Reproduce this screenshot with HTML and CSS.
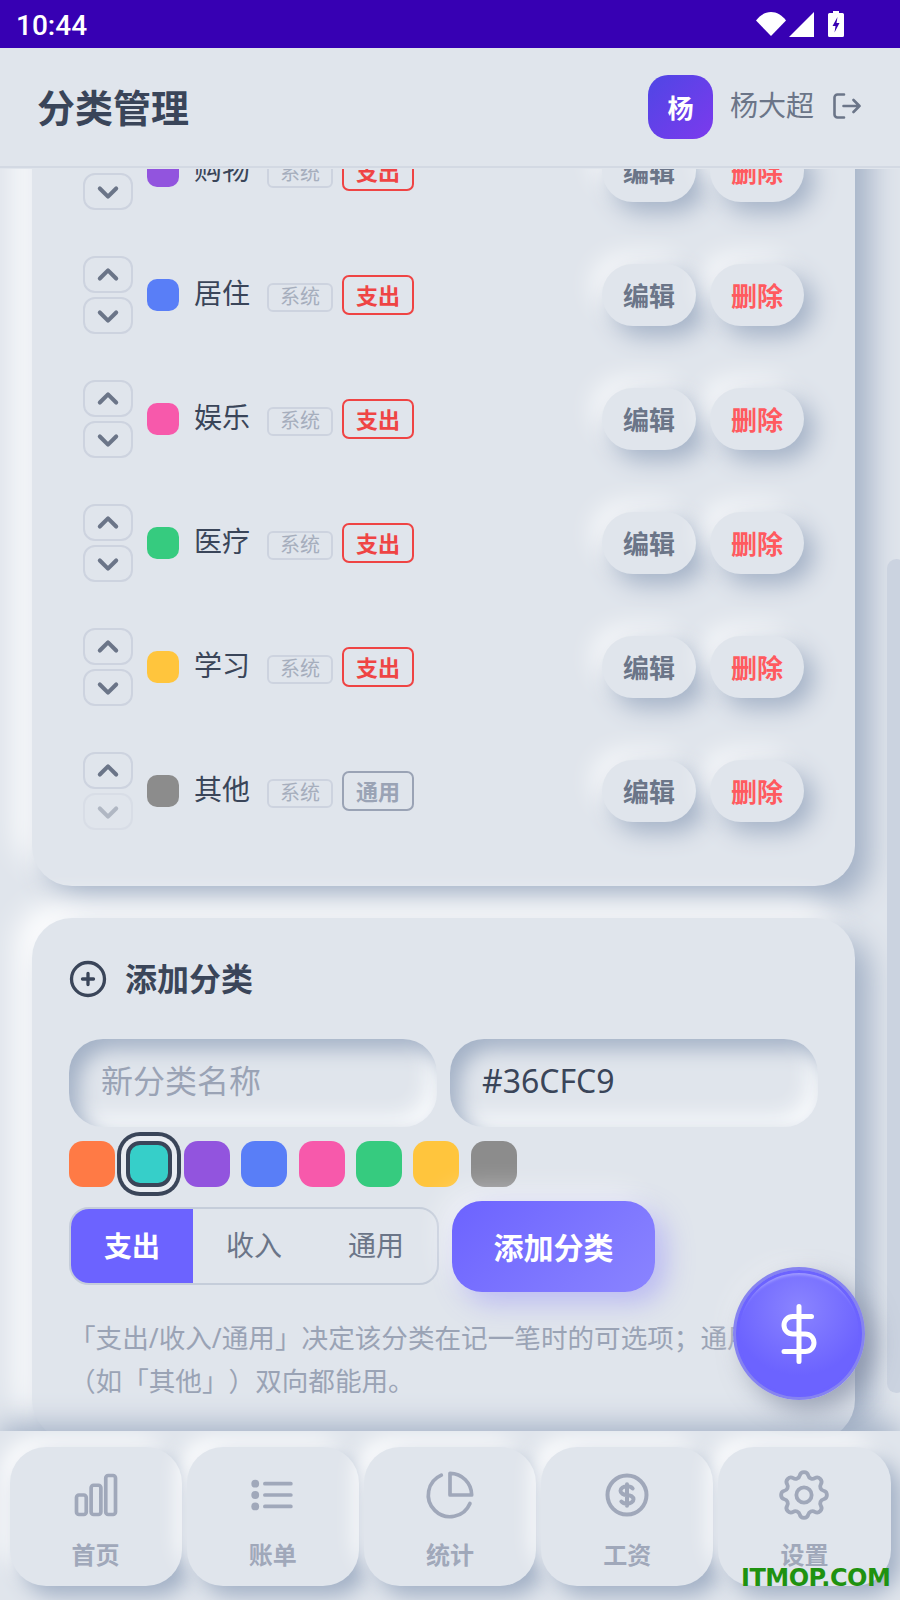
FILE: index.html
```html
<!DOCTYPE html>
<html lang="zh">
<head>
<meta charset="utf-8">
<title>分类管理</title>
<link rel="stylesheet" href="styles.css">
</head>
<body>
<div class="app">
  <div class="statusbar">
    <span class="time">10:44</span>
    <div class="status-icons">
      <svg class="ic-wifi" viewBox="0 0 30 24"><path d="M0 8.5C4 3.2 9.2 0 15 0s11 3.200 15 8.500L15 24z"/></svg>
      <svg class="ic-signal" viewBox="0 0 25 25"><path d="M25 0v25H0z"/></svg>
      <svg class="ic-battery" viewBox="0 0 16 26"><path fill="#fff" d="M5 0h6v2h3.500A1.500 1.500 0 0 1 16 3.500v21a1.500 1.500 0 0 1-1.500 1.500h-13A1.500 1.500 0 0 1 0 24.500v-21A1.500 1.500 0 0 1 1.500 2H5z"/><path fill="#3700b3" d="M9.500 6 4.500 15h3l-1 6.500 5-9.500h-3z"/></svg>
    </div>
  </div>

  <header class="header">
    <h1 class="title">分类管理</h1>
    <div class="user">
      <div class="avatar">杨</div>
      <span class="username">杨大超</span>
      <svg class="ic-logout" viewBox="0 0 28 26" fill="none" stroke-linecap="round" stroke-linejoin="round"><path d="M11 1.500H4.500a3 3 0 0 0-3 3v17a3 3 0 0 0 3 3H11M10.500 13h16M20.500 7l6 6-6 6"/></svg>
    </div>
  </header>

  <main class="main">
    <div class="scroller">
      <section class="card card-list">
        <div class="row">
          <div class="arrows"><button class="arrow"><svg viewBox="0 0 24 24"><path d="M5 15l7-7 7 7"/></svg></button><button class="arrow"><svg viewBox="0 0 24 24"><path d="M5 9l7 7 7-7"/></svg></button></div>
          <span class="swatch c-purple"></span><span class="name">购物</span><span class="sys">系统</span><span class="type expense">支出</span>
          <div class="actions"><button class="btn edit">编辑</button><button class="btn del">删除</button></div>
        </div>
        <div class="row">
          <div class="arrows"><button class="arrow"><svg viewBox="0 0 24 24"><path d="M5 15l7-7 7 7"/></svg></button><button class="arrow"><svg viewBox="0 0 24 24"><path d="M5 9l7 7 7-7"/></svg></button></div>
          <span class="swatch c-blue"></span><span class="name">居住</span><span class="sys">系统</span><span class="type expense">支出</span>
          <div class="actions"><button class="btn edit">编辑</button><button class="btn del">删除</button></div>
        </div>
        <div class="row">
          <div class="arrows"><button class="arrow"><svg viewBox="0 0 24 24"><path d="M5 15l7-7 7 7"/></svg></button><button class="arrow"><svg viewBox="0 0 24 24"><path d="M5 9l7 7 7-7"/></svg></button></div>
          <span class="swatch c-pink"></span><span class="name">娱乐</span><span class="sys">系统</span><span class="type expense">支出</span>
          <div class="actions"><button class="btn edit">编辑</button><button class="btn del">删除</button></div>
        </div>
        <div class="row">
          <div class="arrows"><button class="arrow"><svg viewBox="0 0 24 24"><path d="M5 15l7-7 7 7"/></svg></button><button class="arrow"><svg viewBox="0 0 24 24"><path d="M5 9l7 7 7-7"/></svg></button></div>
          <span class="swatch c-green"></span><span class="name">医疗</span><span class="sys">系统</span><span class="type expense">支出</span>
          <div class="actions"><button class="btn edit">编辑</button><button class="btn del">删除</button></div>
        </div>
        <div class="row">
          <div class="arrows"><button class="arrow"><svg viewBox="0 0 24 24"><path d="M5 15l7-7 7 7"/></svg></button><button class="arrow"><svg viewBox="0 0 24 24"><path d="M5 9l7 7 7-7"/></svg></button></div>
          <span class="swatch c-yellow"></span><span class="name">学习</span><span class="sys">系统</span><span class="type expense">支出</span>
          <div class="actions"><button class="btn edit">编辑</button><button class="btn del">删除</button></div>
        </div>
        <div class="row">
          <div class="arrows"><button class="arrow"><svg viewBox="0 0 24 24"><path d="M5 15l7-7 7 7"/></svg></button><button class="arrow disabled"><svg viewBox="0 0 24 24"><path d="M5 9l7 7 7-7"/></svg></button></div>
          <span class="swatch c-gray"></span><span class="name">其他</span><span class="sys">系统</span><span class="type general">通用</span>
          <div class="actions"><button class="btn edit">编辑</button><button class="btn del">删除</button></div>
        </div>
      </section>

      <section class="card card-add">
        <div class="add-head">
          <svg class="ic-plus" viewBox="0 0 24 24" fill="none"><path d="M12 9v3m0 0v3m0-3h3m-3 0H9m12 0a9 9 0 11-18 0 9 9 0 0118 0z" stroke-linecap="round" stroke-linejoin="round"/></svg>
          <h2 class="add-title">添加分类</h2>
        </div>
        <div class="inputs">
          <div class="input placeholder">新分类名称</div>
          <div class="input value">#36CFC9</div>
        </div>
        <div class="palette">
          <span class="pick c-orange"></span>
          <span class="pick c-teal selected"></span>
          <span class="pick c-purple"></span>
          <span class="pick c-blue"></span>
          <span class="pick c-pink"></span>
          <span class="pick c-green"></span>
          <span class="pick c-yellow"></span>
          <span class="pick c-gray"></span>
        </div>
        <div class="submit-row">
          <div class="segment">
            <span class="seg active">支出</span>
            <span class="seg">收入</span>
            <span class="seg">通用</span>
          </div>
          <button class="submit">添加分类</button>
        </div>
        <p class="hint">「支出/收入/通用」决定该分类在记一笔时的可选项；通用（如「其他」）双向都能用。</p>
      </section>
    </div>
    <div class="scrollbar"></div>
  </main>

  <nav class="nav">
    <a class="tab">
      <svg viewBox="0 0 24 24" fill="none"><path stroke-linecap="round" stroke-linejoin="round" d="M3 13.125C3 12.504 3.504 12 4.125 12h2.250c.621 0 1.125.504 1.125 1.125v6.750C7.500 20.496 6.996 21 6.375 21h-2.250A1.125 1.125 0 013 19.875v-6.750zM9.750 8.625c0-.621.504-1.125 1.125-1.125h2.250c.621 0 1.125.504 1.125 1.125v11.250c0 .621-.504 1.125-1.125 1.125h-2.250a1.125 1.125 0 01-1.125-1.125V8.625zM16.500 4.125c0-.621.504-1.125 1.125-1.125h2.250C20.496 3 21 3.504 21 4.125v15.750c0 .621-.504 1.125-1.125 1.125h-2.250a1.125 1.125 0 01-1.125-1.125V4.125z"/></svg>
      <span class="tab-label">首页</span>
    </a>
    <a class="tab">
      <svg viewBox="0 0 24 24" fill="none"><path stroke-linecap="round" d="M8.250 6.750h12M8.250 12h12m-12 5.250h12"/><circle class="dot" cx="3.800" cy="6.750" r="1.800"/><circle class="dot" cx="3.800" cy="12" r="1.800"/><circle class="dot" cx="3.800" cy="17.250" r="1.800"/></svg>
      <span class="tab-label">账单</span>
    </a>
    <a class="tab">
      <svg viewBox="0 0 24 24" fill="none"><path stroke-linecap="round" stroke-linejoin="round" d="M21.210 15.890A10 10 0 1 1 8 2.830M22 12A10 10 0 0 0 12 2v10z"/></svg>
      <span class="tab-label">统计</span>
    </a>
    <a class="tab">
      <svg class="ic-coin" viewBox="0 0 24 24" fill="none"><path stroke-linecap="round" stroke-linejoin="round" d="M12 8c-1.657 0-3 .895-3 2s1.343 2 3 2 3 .895 3 2-1.343 2-3 2m0-8c1.110 0 2.080.402 2.599 1M12 8V7m0 1v8m0 0v1m0-1c-1.110 0-2.080-.402-2.599-1M21 12a9 9 0 11-18 0 9 9 0 0118 0z"/></svg>
      <span class="tab-label">工资</span>
    </a>
    <a class="tab">
      <svg class="ic-cog" viewBox="1 1 22 22" fill="none"><path stroke-linecap="round" stroke-linejoin="round" d="M10.325 4.317c.426-1.756 2.924-1.756 3.350 0a1.724 1.724 0 002.573 1.066c1.543-.940 3.310.826 2.370 2.370a1.724 1.724 0 001.065 2.572c1.756.426 1.756 2.924 0 3.350a1.724 1.724 0 00-1.066 2.573c.940 1.543-.826 3.310-2.370 2.370a1.724 1.724 0 00-2.572 1.065c-.426 1.756-2.924 1.756-3.350 0a1.724 1.724 0 00-2.573-1.066c-1.543.940-3.310-.826-2.370-2.370a1.724 1.724 0 00-1.065-2.572c-1.756-.426-1.756-2.924 0-3.350a1.724 1.724 0 001.066-2.573c-.940-1.543.826-3.310 2.370-2.370.996.608 2.296.070 2.572-1.065zM15 12a3 3 0 11-6 0 3 3 0 016 0z"/></svg>
      <span class="tab-label">设置</span>
    </a>
  </nav>

  <button class="fab"><svg viewBox="0 0 24 24" fill="none"><path stroke-linecap="round" stroke-linejoin="round" d="M12 1v22M17 5H9.500a3.500 3.500 0 0 0 0 7h5a3.500 3.500 0 0 1 0 7H6"/></svg></button>
  <div class="watermark">ITMOP.COM</div>
</div>
</body>
</html>
```

FILE: styles.css
```css
* { box-sizing: border-box; }
html, body { margin: 0; padding: 0; }
body {
  font-family: "Noto Sans", "Noto Sans CJK SC", sans-serif;
  background: #e0e5ec;
  color: #3a4559;
  text-spacing-trim: space-all;
}
button { font-family: inherit; border: none; padding: 0; cursor: pointer; }
h1, h2, p { margin: 0; }

.app {
  position: relative;
  width: 900px;
  height: 1600px;
  overflow: hidden;
  display: flex;
  flex-direction: column;
  background: #e0e5ec;
}

/* status bar */
.statusbar {
  flex: none;
  height: 48px;
  background: #3700b3;
  display: flex;
  align-items: center;
  justify-content: space-between;
  padding: 0 56px 0 16px;
  color: #fff;
  position: relative;
  z-index: 5;
}
.time { font-family: Roboto, sans-serif; font-size: 28px; font-weight: 500; padding-top: 3px; }
.status-icons { display: flex; align-items: center; }
.status-icons svg { display: block; fill: #fff; }
.ic-wifi { width: 30px; height: 24px; margin-right: 3px; }
.ic-signal { width: 25px; height: 25px; margin-right: 14px; }
.ic-battery { width: 16px; height: 26px; }

/* header */
.header {
  flex: none;
  height: 120px;
  background: #e0e5ec;
  border-bottom: 2px solid #d3d9e3;
  box-shadow: 0 1px 0 #e0e5ec;
  display: flex;
  align-items: center;
  justify-content: space-between;
  padding: 0 39px 0 37px;
  position: relative;
  z-index: 4;
}
.title { font-size: 38px; font-weight: 700; color: #3a4559; line-height: 1; }
.user { display: flex; align-items: center; }
.avatar {
  width: 65px;
  height: 64px;
  border-radius: 20px;
  background: linear-gradient(135deg, #4f46e5, #7c3aed);
  color: #fff;
  font-size: 26px;
  font-weight: 700;
  display: flex;
  align-items: center;
  justify-content: center;
}
.username { font-size: 28px; color: #6b7588; margin-left: 17px; padding-bottom: 6px; }
.ic-logout { width: 28px; height: 26px; margin-left: 19px; margin-bottom: 2px; stroke: #6b7588; stroke-width: 2.6; }

/* main scroll area */
.main {
  flex: 1;
  min-height: 0;
  position: relative;
  overflow: hidden;
}
.scroller {
  margin-top: -96px;
  padding: 0 45px 0 32px;
  display: flex;
  flex-direction: column;
  gap: 32px;
}
.card {
  background: #e0e5ec;
  border-radius: 40px;
  box-shadow: 15px 15px 30px #a3b1c6, -15px -15px 30px #fff;
}
.scrollbar {
  position: absolute;
  top: 391px;
  right: -6px;
  width: 19px;
  height: 834px;
  border-radius: 10px;
  background: #cbd3e0;
}

/* category list */
.card-list { padding: 37px 51px 33px; }
.row {
  display: flex;
  align-items: center;
  padding: 23px 0;
}
.arrows { display: flex; flex-direction: column; gap: 4px; }
.arrow {
  width: 50px;
  height: 37px;
  border: 2px solid #cdd3df;
  border-radius: 12px;
  background: transparent;
  display: flex;
  align-items: center;
  justify-content: center;
}
.arrow svg { width: 28px; height: 28px; fill: none; stroke: #6b7588; stroke-width: 3.500; stroke-linecap: round; stroke-linejoin: round; }
.arrow.disabled { opacity: .4; }
.swatch { width: 32px; height: 32px; border-radius: 10px; margin-left: 14px; flex: none; }
.c-purple { background: #9254de; }
.c-blue { background: #597ef7; }
.c-pink { background: #f759ab; }
.c-green { background: #36cb7f; }
.c-yellow { background: #ffc53d; }
.c-gray { background: #8c8c8c; }
.c-orange { background: #ff7a45; }
.c-teal { background: #36cfc9; }
.name { font-size: 28px; color: #3a4559; margin-left: 15px; width: 56px; line-height: 40px; padding-bottom: 4px; height: 44px; }
.sys {
  margin-left: 17px;
  margin-top: 4px;
  width: 66px;
  height: 29px;
  border: 2px solid #cdd3df;
  border-radius: 6px;
  font-size: 20px;
  line-height: 23px;
  text-align: center;
  color: #a6aebd;
}
.type {
  margin-left: 9px;
  width: 72px;
  height: 40px;
  border: 2px solid;
  border-radius: 7px;
  font-size: 22px;
  font-weight: 700;
  line-height: 36px;
  text-align: center;
}
.type.expense { color: #ef4444; border-color: #ef4444; }
.type.general { color: #9aa3b5; border-color: #9aa3b5; }
.actions { margin-left: auto; display: flex; gap: 14px; }
.btn {
  width: 94px;
  height: 62px;
  border-radius: 31px;
  background: #e0e5ec;
  box-shadow: 10px 10px 24px #a3b1c6, -10px -10px 24px rgba(255, 255, 255, .75);
  font-size: 26px;
  font-weight: 700;
}
.btn.edit { color: #6b7588; }
.btn.del { color: #ff5a5f; }

/* add form */
.card-add { padding: 39px 37px 37px; }
.add-head { display: flex; align-items: center; gap: 15px; height: 44px; }
.ic-plus { width: 44px; height: 44px; margin-left: -3px; stroke: #3a4559; stroke-width: 1.800; }
.add-title { font-size: 32px; font-weight: 700; color: #3a4559; padding-bottom: 4px; }
.inputs { display: flex; gap: 13px; margin-top: 38px; }
.input {
  flex: 1;
  height: 88px;
  border-radius: 34px;
  box-shadow: inset 10px 10px 20px #a3b1c6, inset -10px -10px 20px #f8fafc;
  padding: 0 32px;
  font-size: 32px;
  line-height: 84px;
}
.input.placeholder { color: #9aa3b5; }
.input.value { color: #3a4559; }
.palette { display: flex; gap: 11.400px; margin-top: 14px; }
.pick { width: 46px; height: 46px; border-radius: 14px; flex: none; }
.pick.selected {
  border: 4px solid #3a4559;
  box-shadow: 0 0 0 5px #e8ecf2, 0 0 0 9px #3a4559;
}
.submit-row { display: flex; align-items: flex-start; gap: 13px; margin-top: 14px; }
.segment {
  width: 370px;
  height: 78px;
  margin-top: 6px;
  border: 2px solid #c5cdda;
  border-radius: 20px;
  display: flex;
  overflow: hidden;
}
.seg {
  flex: 1;
  font-size: 28px;
  color: #6b7588;
  display: flex;
  align-items: center;
  justify-content: center;
  padding-bottom: 5px;
}
.seg.active { background: #6c63ff; color: #fff; font-weight: 700; padding-bottom: 3px; }
.submit {
  width: 203px;
  height: 91px;
  border-radius: 30px;
  background: linear-gradient(135deg, #6c63ff, #8a84ff);
  box-shadow: 10px 10px 28px rgba(108, 99, 255, .35), -10px -10px 28px rgba(255, 255, 255, .55);
  color: #fff;
  font-size: 30px;
  font-weight: 700;
  padding-bottom: 2px;
}
.hint {
  margin-top: 25px;
  padding-right: 30px;
  font-size: 26.600px;
  line-height: 43px;
  color: #9aa3b5;
}

/* bottom nav */
.nav {
  flex: none;
  height: 169px;
  background: #e0e5ec;
  display: flex;
  gap: 5px;
  padding: 16px 9.500px 14px 9.500px;
  position: relative;
  z-index: 2;
  box-shadow: 0 -6px 26px #a3b1c6;
  overflow: hidden;
  clip-path: inset(-40px 0 0 0);
}
.tab {
  flex: 1;
  border-radius: 36px;
  background: #e0e5ec;
  box-shadow: 10px 10px 20px #a3b1c6, -10px -10px 20px rgba(255, 255, 255, .85);
  display: flex;
  flex-direction: column;
  align-items: center;
  padding-top: 20px;
  color: #a0a8ba;
}
.tab svg { width: 52px; height: 52px; margin: 2px 0; stroke: #a0a8ba; stroke-width: 1.700; display: block; }
.tab svg.ic-coin { stroke-width: 1.850; }
.tab svg.ic-cog { width: 56px; height: 56px; margin: 0; stroke-width: 1.500; }
.tab .dot { fill: #a0a8ba; stroke: none; }
.tab-label { font-size: 24px; font-weight: 700; line-height: 32px; margin-top: 16px; }

/* floating action */
.fab {
  position: absolute;
  left: 733px;
  top: 1267px;
  width: 132px;
  height: 133px;
  border-radius: 50%;
  border: 3px solid #8683f0;
  background: radial-gradient(circle at 50% 30%, #8a84ff, #6c63ff 62%);
  box-shadow: inset 0 0 0 3px #6c63ff, inset 0 6px 3px -1px rgba(255, 255, 255, .3), 10px 10px 24px rgba(125, 135, 160, .7), -8px -8px 20px rgba(255, 255, 255, .3);
  display: flex;
  align-items: center;
  justify-content: center;
  z-index: 3;
}
.fab svg { width: 60px; height: 60px; stroke: #fff; stroke-width: 2; }

.watermark {
  position: absolute;
  left: 741px;
  top: 1562px;
  font-family: "DejaVu Sans", sans-serif;
  font-size: 24px;
  font-weight: 700;
  line-height: 32px;
  color: #1f9210;
  letter-spacing: -0.500px;
  z-index: 6;
}
```
